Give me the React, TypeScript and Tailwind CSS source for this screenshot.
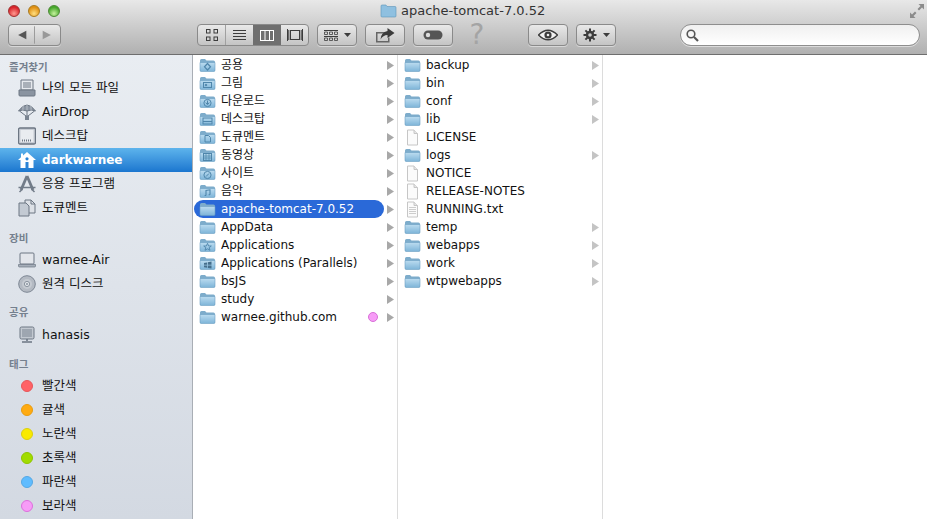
import type { ReactNode } from "react";

const FONT = { fontFamily: '"DejaVu Sans", "Noto Sans CJK KR", sans-serif' };

function Folder({ glyph }: { glyph?: ReactNode }) {
  return (
    <svg width={17} height={14} viewBox="0 0 17 14" className="shrink-0">
      <defs>
        <linearGradient id="fold" x1="0" y1="0" x2="0" y2="1">
          <stop offset="0" stopColor="#bcdcf0" />
          <stop offset="1" stopColor="#7db4d8" />
        </linearGradient>
      </defs>
      <path d="M1 2.5 Q1 1 2.5 1 H6 L7.5 2.5 H14.5 Q16 2.5 16 4 V12 Q16 13 15 13 H2 Q1 13 1 12 Z" fill="#7daccb" />
      <path d="M1 4.5 H16 V12 Q16 13.5 15 13.5 H2 Q1 13.5 1 12 Z" fill="url(#fold)" stroke="#6ba0c3" strokeWidth="0.6" />
      {glyph}
    </svg>
  );
}

const g = "#4f86ab";
const glyphs: Record<string, ReactNode> = {
  public: <path d="M8.5 5.5 L11.5 8.8 L8.5 12 L5.5 8.8 Z" fill="none" stroke={g} strokeWidth="1.2" />,
  picture: <g fill="none" stroke={g}><rect x="4.5" y="6.5" width="8" height="5" /><circle cx="7" cy="9" r="0.8" fill={g} /></g>,
  down: <g><circle cx="8.5" cy="9" r="3.6" fill="none" stroke={g} /><path d="M8.5 6.5 V10 M6.8 8.6 L8.5 10.6 L10.2 8.6" fill="none" stroke={g} /></g>,
  desk: <g fill="none" stroke={g}><rect x="4" y="6" width="9" height="6" /><path d="M4 9.5 H13" /></g>,
  doc: <path d="M6 5.5 H9.5 L11.5 7.5 V12 H6 Z" fill="none" stroke={g} />,
  movie: <g fill="none" stroke={g}><rect x="4.5" y="5.5" width="8" height="7" /><path d="M7 5.5 V12.5 M10 5.5 V12.5 M4.5 8 H12.5 M4.5 10 H12.5" strokeWidth="0.7" /></g>,
  site: <g fill="none" stroke={g}><circle cx="8.5" cy="9" r="3.6" /><path d="M7 10.5 L10 7.5" /></g>,
  music: <path d="M7 11.5 V6.5 L11 5.8 V10.8 M5.6 11.5 H7 M9.6 10.8 H11" fill="none" stroke={g} strokeWidth="1.1" />,
  apps: <path d="M8.5 5.3 L9.6 8 H12.3 L10.2 9.7 L11 12.3 L8.5 10.8 L6 12.3 L6.8 9.7 L4.7 8 H7.4 Z" fill="none" stroke={g} strokeWidth="0.9" />,
  win: <path d="M5 7 L8 6.4 V8.7 H5 Z M8.8 6.2 L12.5 5.6 V8.7 H8.8 Z M5 9.5 H8 V11.8 L5 11.3 Z M8.8 9.5 H12.5 V12.4 L8.8 11.9 Z" fill="#466f8c" />,
};

function FileIcon({ lines }: { lines?: boolean }) {
  return (
    <svg width={17} height={17} viewBox="0 0 17 17" className="shrink-0">
      <path d="M3.5 1 H10 L13.5 4.5 V16 H3.5 Z" fill="#fbfbfb" stroke="#c6c6c6" />
      <path d="M10 1 V4.5 H13.5" fill="#e6e6e6" stroke="#c6c6c6" />
      {lines && <path d="M5 6.5 H12 M5 8.5 H12 M5 10.5 H12 M5 12.5 H12" stroke="#cdcdcd" />}
    </svg>
  );
}

function Arrow({ light }: { light?: boolean }) {
  return (
    <svg width={7} height={9} viewBox="0 0 7 9" className="shrink-0">
      <path d="M0 0 L7 4.5 L0 9 Z" fill={light ? "#c4c4c4" : "#a8a8a8"} />
    </svg>
  );
}

interface RowItem {
  name: string;
  glyph?: string;
  file?: "plain" | "lines";
  dot?: boolean;
  noArrow?: boolean;
}

const col1: RowItem[] = [
  { name: "공용", glyph: "public" },
  { name: "그림", glyph: "picture" },
  { name: "다운로드", glyph: "down" },
  { name: "데스크탑", glyph: "desk" },
  { name: "도큐멘트", glyph: "doc" },
  { name: "동영상", glyph: "movie" },
  { name: "사이트", glyph: "site" },
  { name: "음악", glyph: "music" },
  { name: "apache-tomcat-7.0.52" },
  { name: "AppData" },
  { name: "Applications", glyph: "apps" },
  { name: "Applications (Parallels)", glyph: "win" },
  { name: "bsJS" },
  { name: "study" },
  { name: "warnee.github.com", dot: true },
];

const col2: RowItem[] = [
  { name: "backup" },
  { name: "bin" },
  { name: "conf" },
  { name: "lib" },
  { name: "LICENSE", file: "plain", noArrow: true },
  { name: "logs" },
  { name: "NOTICE", file: "plain", noArrow: true },
  { name: "RELEASE-NOTES", file: "plain", noArrow: true },
  { name: "RUNNING.txt", file: "lines", noArrow: true },
  { name: "temp" },
  { name: "webapps" },
  { name: "work" },
  { name: "wtpwebapps" },
];

function Column({ items, selected, light }: { items: RowItem[]; selected?: string; light?: boolean }) {
  return (
    <div className="w-[205px] shrink-0 border-r border-[#dcdcdc] bg-white pt-[1px]">
      {items.map((it) => {
        const sel = it.name === selected;
        return (
          <div key={it.name} className="flex h-[18px] items-center pl-[1px] pr-[3px]">
            <div className={`flex h-[18px] min-w-0 flex-1 items-center rounded-full pl-[5px] ${sel ? "bg-[#2a69d8] text-white" : "text-[#111]"}`}>
              {it.file ? <FileIcon lines={it.file === "lines"} /> : <Folder glyph={it.glyph ? glyphs[it.glyph] : undefined} />}
              <span className="ml-[5px] flex-1 truncate text-[12px] leading-[18px]">{it.name}</span>
              {it.dot && <span className="mr-[6px] h-[10px] w-[10px] rounded-full border border-[#d86fd8] bg-[#f79cf7]" />}
            </div>
            <div className="ml-[3px] flex w-[7px] justify-end">{!it.noArrow && <Arrow light={light} />}</div>
          </div>
        );
      })}
    </div>
  );
}

const sideStroke = "#6c7683";

const sideIcons: Record<string, ReactNode> = {
  all: (
    <svg width={18} height={18} viewBox="0 0 18 18">
      <path d="M3 1 H15 V11 H3 Z" fill="#e6e9ee" stroke={sideStroke} />
      <path d="M5 4 H13 M5 6 H13 M5 8 H13" stroke={sideStroke} />
      <path d="M1 11 H17 V16 Q17 17 16 17 H2 Q1 17 1 16 Z" fill="#8a94a1" stroke={sideStroke} />
    </svg>
  ),
  air: (
    <svg width={18} height={18} viewBox="0 0 18 18">
      <path d="M0.5 8 Q9 -4 17.5 8 Q13 6 9 8 Q5 6 0.5 8 Z" fill="#8b95a2" stroke={sideStroke} />
      <path d="M5.5 2.5 Q4.5 5 5 7 M12.5 2.5 Q13.5 5 13 7 M9 1 V7" stroke="#c9ced6" strokeWidth="0.7" fill="none" />
      <path d="M1.5 8 L8 13 M16.5 8 L10 13 M9 8 V13" stroke={sideStroke} />
      <rect x="7" y="12.5" width="4" height="4.5" fill="#7a8491" />
    </svg>
  ),
  desk: (
    <svg width={18} height={18} viewBox="0 0 18 18">
      <rect x="0.5" y="1" width="17" height="16" rx="1.5" fill="#c7ccd4" stroke={sideStroke} strokeWidth="1.3" />
      <rect x="2.5" y="3" width="13" height="12" fill="#e9ecf0" />
      <path d="M4 13.5 H14" stroke="#6c7683" strokeWidth="2" strokeDasharray="1 1" />
    </svg>
  ),
  home: (
    <svg width={18} height={18} viewBox="0 0 18 18">
      <path d="M9 1 L18 9 H15.5 V17 H2.5 V9 H0 L3 6.3 V2.5 H5 V4.5 Z" fill="#fff" />
      <circle cx="9" cy="7.8" r="1.6" fill="#2a83d6" />
      <rect x="7.5" y="11" width="3" height="6" fill="#2a83d6" />
    </svg>
  ),
  apps: (
    <svg width={18} height={18} viewBox="0 0 18 18">
      <path d="M9 1 L3 15 M9 1 L15 15" stroke="#727c89" strokeWidth="2.8" fill="none" />
      <path d="M0.5 12.5 H17.5 M1.5 17 L4.5 14 M16.5 17 L13.5 14" stroke="#727c89" strokeWidth="1.5" />
    </svg>
  ),
  docs: (
    <svg width={18} height={18} viewBox="0 0 18 18">
      <path d="M7 1 H13 L17 5 V14 H7 Z" fill="#dde1e7" stroke={sideStroke} />
      <path d="M1 4 H8 L11 7 V17 H1 Z" fill="#c3cad3" stroke={sideStroke} />
      <path d="M13 1 V5 H17" fill="none" stroke={sideStroke} />
    </svg>
  ),
  laptop: (
    <svg width={18} height={18} viewBox="0 0 18 18">
      <rect x="2" y="2" width="14" height="11" rx="1" fill="#e3e6eb" stroke={sideStroke} />
      <path d="M0.5 13.5 H17.5 V15 Q17.5 16 16.5 16 H1.5 Q0.5 16 0.5 15 Z" fill="#a6aeb9" stroke={sideStroke} strokeWidth="0.7" />
    </svg>
  ),
  disk: (
    <svg width={18} height={18} viewBox="0 0 18 18">
      <circle cx="9" cy="9" r="8.3" fill="#b4bac3" stroke="#7d8693" />
      <circle cx="9" cy="9" r="5" fill="#c5cad1" />
      <circle cx="9" cy="9" r="2.6" fill="#e4e7eb" stroke="#8a939f" />
      <circle cx="9" cy="9" r="1" fill="#8a939f" />
    </svg>
  ),
  server: (
    <svg width={18} height={18} viewBox="0 0 18 18">
      <rect x="2" y="1" width="14" height="12" rx="1.5" fill="#c2c8d0" stroke={sideStroke} />
      <path d="M4 4 H14 M4 6 H14 M4 8 H14 M4 10 H14" stroke="#7a8491" />
      <path d="M9 13 V15 M4 16 H14" stroke={sideStroke} strokeWidth="1.6" />
    </svg>
  ),
};

function SideHead({ label, className }: { label: string; className: string }) {
  return <div className={`pl-[9px] text-[10.5px] font-bold leading-[14px] text-[#75808e] ${className}`}>{label}</div>;
}

function SideItem({ icon, label, sel }: { icon: string; label: string; sel?: boolean }) {
  return (
    <div
      className={`flex h-[24px] items-center pl-[18px] ${
        sel ? "bg-gradient-to-b from-[#5db4ec] to-[#1a76cf] text-[12px] font-bold text-white" : "text-[12.5px] text-[#111]"
      }`}
    >
      <span className="flex w-[18px] shrink-0 justify-center">{sideIcons[icon]}</span>
      <span className="ml-[6px]">{label}</span>
    </div>
  );
}

function TagItem({ label, bg, ring }: { label: string; bg: string; ring: string }) {
  return (
    <div className="flex h-[24px] items-center pl-[21px] text-[12.5px] text-[#111]">
      <span className={`h-[12px] w-[12px] rounded-full border ${bg} ${ring}`} />
      <span className="ml-[9px]">{label}</span>
    </div>
  );
}

function Btn({ w, children, className = "" }: { w: string; children: ReactNode; className?: string }) {
  return (
    <div className={`flex h-[22px] items-center justify-center rounded-[4px] border border-[#8a8a8a] bg-gradient-to-b from-[#e9e9e9] to-[#c4c4c4] shadow-[0_1px_0_rgba(255,255,255,0.45)] ${w} ${className}`}>
      {children}
    </div>
  );
}

const ink = "#3c3c3c";

function Caret() {
  return (
    <svg width={7} height={4} viewBox="0 0 7 4" className="ml-[6px]">
      <path d="M0 0 H7 L3.5 4 Z" fill={ink} />
    </svg>
  );
}

function Toolbar() {
  return (
    <div className="relative h-[55px] shrink-0 border-b border-[#6e6e6e] bg-gradient-to-b from-[#e8e8e8] to-[#b0b0b0]">
      {/* traffic lights */}
      <div className="flex h-[22px] items-center gap-[8px] pl-[8px]">
        <span className="h-[12px] w-[12px] rounded-full border border-[#a03030] bg-[radial-gradient(circle_at_50%_75%,#ff9a90,#d8232a_70%)]" />
        <span className="h-[12px] w-[12px] rounded-full border border-[#a87a20] bg-[radial-gradient(circle_at_50%_75%,#ffdf80,#e08e10_70%)]" />
        <span className="h-[12px] w-[12px] rounded-full border border-[#4c8a35] bg-[radial-gradient(circle_at_50%_75%,#c5f29d,#45a62a_70%)]" />
      </div>
      {/* title sits over the bar */}
      <div className="absolute left-[380px] top-[2px] flex items-center text-[13px] leading-[18px] text-[#333]">
        <svg width={17} height={14} viewBox="0 0 17 14">
          <path d="M1 2 Q1 1 2 1 H6 L7 2.5 H15 Q16 2.5 16 3.5 V12 Q16 13 15 13 H2 Q1 13 1 12 Z" fill="#8fc0e0" stroke="#5d93b8" strokeWidth="0.6" />
        </svg>
        <span className="ml-[4px]">apache-tomcat-7.0.52</span>
      </div>
      <svg width={14} height={14} viewBox="0 0 14 14" className="absolute right-[3px] top-[4px]">
        <path d="M14 0 H8.5 L10.5 2 L7.5 5 L9 6.5 L12 3.5 L14 5.5 Z M0 14 H5.5 L3.5 12 L6.5 9 L5 7.5 L2 10.5 L0 8.5 Z" fill="#8b8b8b" />
      </svg>

      <div className="mt-[2px] flex items-center pl-[8px]">
        <Btn w="w-[53px]">
          <svg width={53} height={20} viewBox="0 0 53 20">
            <path d="M9.5 10 L18 5.5 V14.5 Z" fill="#555" />
            <path d="M26.5 1 V19" stroke="#999" />
            <path d="M43.5 10 L35 5.5 V14.5 Z" fill="#999" />
          </svg>
        </Btn>
        <div className="ml-[136px] flex h-[22px] w-[112px] overflow-hidden rounded-[4px] border border-[#8a8a8a] bg-gradient-to-b from-[#e9e9e9] to-[#c4c4c4]">
          <div className="flex w-[28px] items-center justify-center border-r border-[#a0a0a0]">
            <svg width={12} height={12} viewBox="0 0 12 12" fill="none" stroke={ink}>
              <rect x="0.5" y="0.5" width="3.5" height="3.5" />
              <rect x="8" y="0.5" width="3.5" height="3.5" />
              <rect x="0.5" y="8" width="3.5" height="3.5" />
              <rect x="8" y="8" width="3.5" height="3.5" />
            </svg>
          </div>
          <div className="flex w-[27px] items-center justify-center">
            <svg width={13} height={11} viewBox="0 0 13 11" stroke={ink}>
              <path d="M0 0.5 H13 M0 3.5 H13 M0 6.5 H13 M0 9.5 H13" />
            </svg>
          </div>
          <div className="flex w-[28px] items-center justify-center bg-[#6f6f6f]">
            <svg width={14} height={11} viewBox="0 0 14 11" fill="none" stroke="#fff">
              <rect x="0.5" y="0.5" width="13" height="10" />
              <path d="M5 0.5 V10.5 M9.5 0.5 V10.5" />
            </svg>
          </div>
          <div className="flex flex-1 items-center justify-center">
            <svg width={16} height={12} viewBox="0 0 16 12" fill="none" stroke={ink}>
              <rect x="3.5" y="1.5" width="9" height="9" />
              <path d="M0.5 0 V12 M1.8 1 V11 M15.5 0 V12 M14.2 1 V11" />
            </svg>
          </div>
        </div>
        <Btn w="w-[40px]" className="ml-[8px]">
          <svg width={14} height={11} viewBox="0 0 14 11" fill={ink}>
            <path d="M0 0 H14 V1 H0 Z M0 6 H14 V7 H0 Z" />
            <path d="M0.5 2 H3.5 V4.5 H0.5 Z M5.5 2 H8.5 V4.5 H5.5 Z M10.5 2 H13.5 V4.5 H10.5 Z M0.5 8 H3.5 V10.5 H0.5 Z M5.5 8 H8.5 V10.5 H5.5 Z M10.5 8 H13.5 V10.5 H10.5 Z" fill="none" stroke={ink} strokeWidth="0.8" />
          </svg>
          <Caret />
        </Btn>
        <Btn w="w-[40px]" className="ml-[8px]">
          <svg width={20} height={15} viewBox="0 0 20 15">
            <path d="M1 4 H10 V5.5 H2.5 V13 H13 V9.5 H14.5 V14.5 H1 Z" fill="#666" />
            <path d="M12.5 0 L19.5 5 L12.5 10 V7 Q8 7 5.5 11.5 Q6 4 12.5 3 Z" fill={ink} />
          </svg>
        </Btn>
        <Btn w="w-[40px]" className="ml-[8px]">
          <svg width={20} height={10} viewBox="0 0 20 10">
            <rect x="0.5" y="0.5" width="19" height="9" rx="4.5" fill="#555" />
            <circle cx="5" cy="5" r="2.2" fill="#ddd" />
          </svg>
        </Btn>
        <span className="ml-[14px] w-[20px] text-center text-[28px] font-normal leading-[22px] text-[#a4a4a4]">?</span>
        <Btn w="w-[40px]" className="ml-[41px]">
          <svg width={20} height={12} viewBox="0 0 20 12">
            <path d="M0.5 6 Q10 -3.5 19.5 6 Q10 15.5 0.5 6 Z" fill="#f2f2f2" stroke={ink} strokeWidth="1.4" />
            <circle cx="10" cy="6" r="3.6" fill={ink} />
            <circle cx="10" cy="6" r="1.3" fill="#eee" />
          </svg>
        </Btn>
        <Btn w="w-[40px]" className="ml-[8px]">
          <svg width={14} height={14} viewBox="0 0 14 14">
            <path d="M7 0.5 V13.5 M0.5 7 H13.5 M2.4 2.4 L11.6 11.6 M11.6 2.4 L2.4 11.6" stroke={ink} strokeWidth="2" />
            <circle cx="7" cy="7" r="4.2" fill={ink} />
            <circle cx="7" cy="7" r="1.8" fill="#ccc" />
          </svg>
          <Caret />
        </Btn>
        <div className="ml-[64px] flex h-[22px] w-[240px] items-center rounded-full border border-[#8e8e8e] bg-gradient-to-b from-[#f0f0f0] to-white pl-[5px] shadow-[0_1px_0_rgba(255,255,255,0.5)]">
          <svg width={13} height={13} viewBox="0 0 13 13" fill="none" stroke="#555">
            <circle cx="5" cy="5" r="3.8" strokeWidth="1.6" />
            <path d="M8 8 L12 12" strokeWidth="2.2" />
          </svg>
        </div>
      </div>
    </div>
  );
}

export default function App() {
  return (
    <div className="flex h-[519px] w-[927px] flex-col overflow-hidden bg-white" style={FONT}>
      <Toolbar />
      <div className="flex min-h-0 flex-1">
        <div className="w-[193px] shrink-0 border-r border-[#a9aeb5] bg-gradient-to-b from-[#e9edf2] to-[#d3d9e2]">
          <SideHead label="즐겨찾기" className="pt-[5px]" />
          <div className="mt-[2px]">
            <SideItem icon="all" label="나의 모든 파일" />
            <SideItem icon="air" label="AirDrop" />
            <SideItem icon="desk" label="데스크탑" />
            <SideItem icon="home" label="darkwarnee" sel />
            <SideItem icon="apps" label="응용 프로그램" />
            <SideItem icon="docs" label="도큐멘트" />
          </div>
          <SideHead label="장비" className="mt-[11px] mb-[3px]" />
          <SideItem icon="laptop" label="warnee-Air" />
          <SideItem icon="disk" label="원격 디스크" />
          <SideHead label="공유" className="mt-[9px] mb-[4px]" />
          <SideItem icon="server" label="hanasis" />
          <SideHead label="태그" className="mt-[10px] mb-[3px]" />
          <TagItem label="빨간색" bg="bg-[#ff6266]" ring="border-[#e6575b]" />
          <TagItem label="귤색" bg="bg-[#ffab12]" ring="border-[#e89c10]" />
          <TagItem label="노란색" bg="bg-[#f9ea00]" ring="border-[#dccf10]" />
          <TagItem label="초록색" bg="bg-[#a1dc00]" ring="border-[#8fc400]" />
          <TagItem label="파란색" bg="bg-[#5fbcff]" ring="border-[#55a8e4]" />
          <TagItem label="보라색" bg="bg-[#f79cf7]" ring="border-[#dc6fdc]" />
        </div>
        <Column items={col1} selected="apache-tomcat-7.0.52" />
        <Column items={col2} light />
        <div className="flex-1 bg-white" />
      </div>
    </div>
  );
}
